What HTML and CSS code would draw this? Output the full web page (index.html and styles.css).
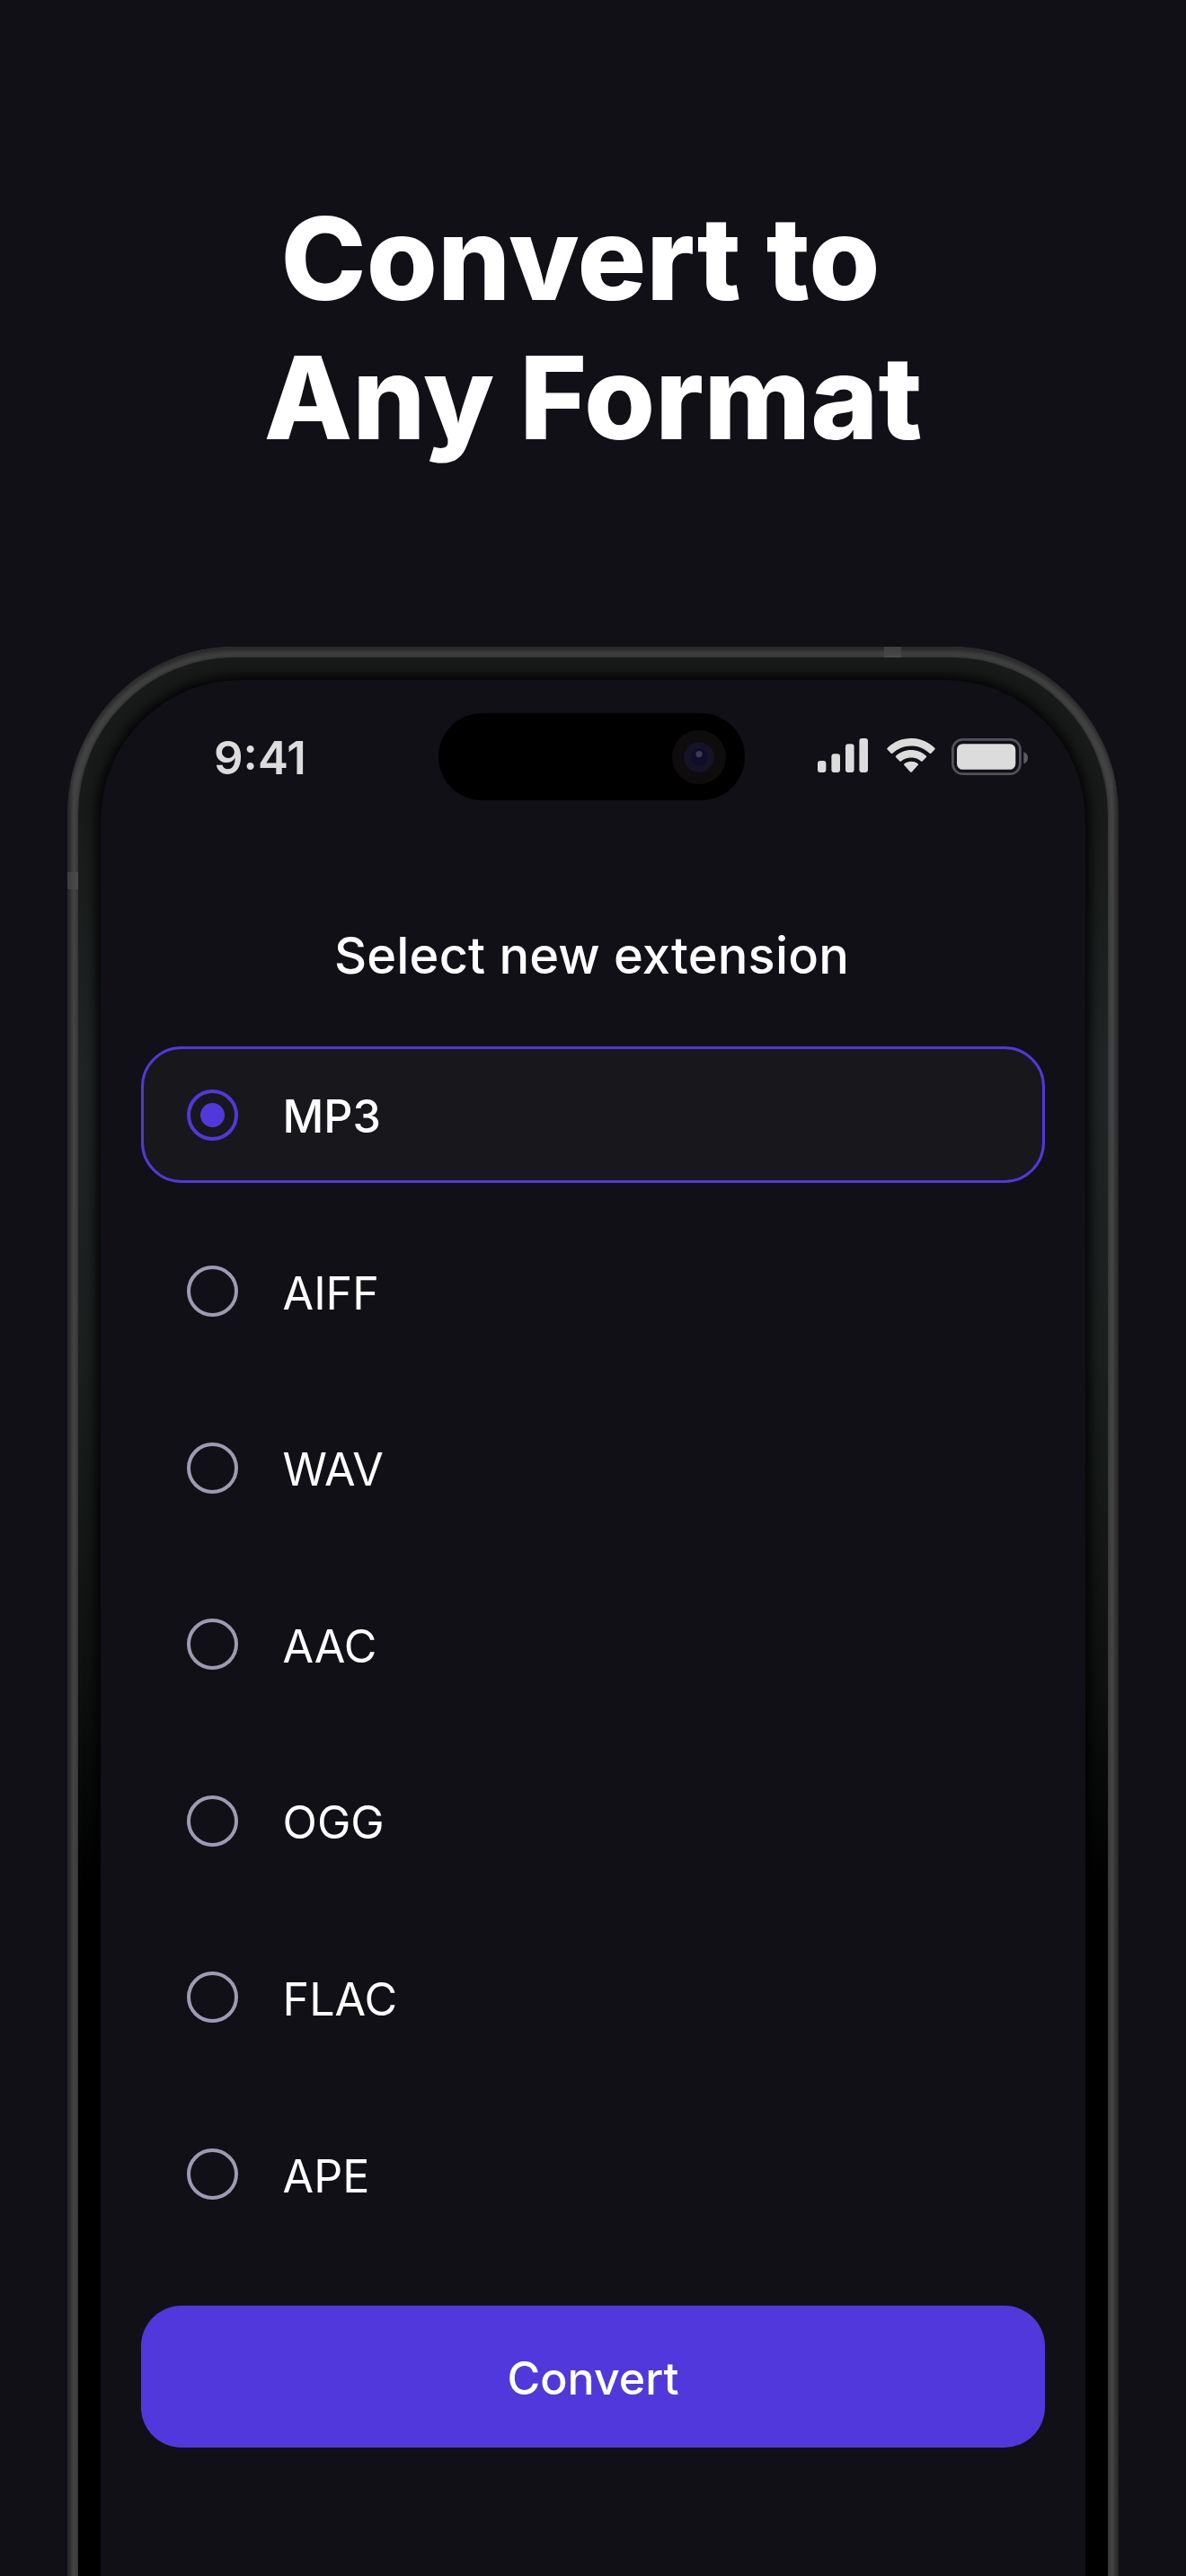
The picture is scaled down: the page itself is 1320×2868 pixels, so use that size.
FILE: index.html
```
<!DOCTYPE html>
<html lang="en">
<head>
    <meta charset="UTF-8">
    <meta name="viewport" content="width=device-width, initial-scale=1.0">
    <title>Convert to Any Format</title>
    <link rel="stylesheet" href="styles.css">
</head>
<body>
    <h1 class="headline">Convert to 
Any Format</h1>

    <div class="phone">
        <span class="antenna antenna-top"></span>
        <span class="antenna antenna-left"></span>
        <div class="bezel">
            <div class="screen">
                <div class="status-bar">
                    <span class="time">9:41</span>
                    <div class="island">
                        <svg class="camera" viewBox="0 0 60 60">
                            <circle cx="30" cy="30" r="30" fill="#0f0c0e"/>
                            <circle cx="30" cy="30" r="16.7" fill="#171326"/>
                            <circle cx="30" cy="30" r="9.8" fill="#0e0d2c"/>
                            <circle cx="30" cy="26.6" r="3.6" fill="#3f3955"/>
                        </svg>
                    </div>
                    <svg class="status-icons" viewBox="0 0 236 42">
                        <!-- Signal -->
                        <g fill="#dcdcdc">
                            <rect x="0" y="25" width="9.4" height="13" rx="3"/>
                            <rect x="15.4" y="17.3" width="9.6" height="20.7" rx="3"/>
                            <rect x="31" y="6.3" width="9.6" height="31.7" rx="3"/>
                            <rect x="46.4" y="0" width="9.6" height="38" rx="3"/>
                        </g>
                        <!-- Wifi -->
                        <g fill="#dcdcdc">
                            <path d="M104 0c-10.2 0-19.5 4-26.3 10.700-.6.6-.6 1.300 0 1.900l4 4.100c.5.5 1.200.5 1.700 0C88.800 11.500 96 8.400 104 8.400s15.200 3.100 20.600 8.300c.5.5 1.200.5 1.700 0l4-4.100c.6-.6.6-1.300 0-1.900C123.500 4 114.200 0 104 0z"/>
                            <path d="M104 13c-6.5 0-12.3 2.500-16.800 6.500-.6.5-.6 1.200 0 1.800l4.200 4.300c.5.5 1.100.5 1.600 0C96 23 99.800 21.500 104 21.500s8 1.500 11 4.100c.5.5 1.100.5 1.600 0l4.200-4.300c.6-.6.6-1.300 0-1.800C116.300 15.500 110.500 13 104 13z"/>
                            <path d="M104 25.700c-2.800 0-5.400 1-7.500 2.600-.6.5-.6 1.200-.1 1.800l6.800 7.300c.5.5 1.100.5 1.600 0l6.800-7.300c.5-.6.5-1.300-.1-1.800-2.100-1.600-4.700-2.600-7.500-2.600z"/>
                        </g>
                        <!-- Battery -->
                        <rect x="150.4" y="1.400" width="75" height="38.2" rx="11" fill="none" stroke="#535259" stroke-width="2.8"/>
                        <rect x="155" y="6.2" width="65.3" height="28.6" rx="6.5" fill="#dcdcdc"/>
                        <path d="M229.4 15c6.200 2.600 6.200 11 0 13.600z" fill="#5c5b61"/>
                    </svg>
                </div>

                <h2 class="title">Select new extension</h2>

                <ul class="formats">
                    <li class="format selected"><span class="radio"></span><span class="label">MP3</span></li>
                    <li class="format"><span class="radio"></span><span class="label">AIFF</span></li>
                    <li class="format"><span class="radio"></span><span class="label">WAV</span></li>
                    <li class="format"><span class="radio"></span><span class="label">AAC</span></li>
                    <li class="format"><span class="radio"></span><span class="label">OGG</span></li>
                    <li class="format"><span class="radio"></span><span class="label">FLAC</span></li>
                    <li class="format"><span class="radio"></span><span class="label">APE</span></li>
                </ul>

                <button class="convert-btn" type="button">Convert</button>
            </div>
        </div>
    </div>
</body>
</html>
```
FILE: styles.css
```
* {
    box-sizing: border-box;
}

body {
    margin: 0;
    height: 2868px;
    overflow: hidden;
    background-color: #111016;
    color: #fff;
    font-family: Inter, "Liberation Sans", sans-serif;
}

.headline {
    margin: 0;
    padding-top: 210px;
    height: 720px;
    font-size: 128px;
    line-height: 155px;
    font-weight: 800;
    text-align: center;
    white-space: break-spaces;
}

/* Phone frame, cut off at the bottom of the page */
.phone {
    position: relative;
    width: 1170px;
    height: 2148px;
    margin: 0 auto;
    padding: 12px 12px 0;
    border-radius: 186px 186px 0 0;
    background: linear-gradient(90deg, #262626 0, #444 7px, #444 1163px, #262626 1170px);
    box-shadow: inset 0 5px 5px 0 #282828;
    overflow: hidden;
}

.bezel {
    height: 100%;
    padding: 25px 25px 0;
    border-radius: 174px 174px 0 0;
    background: linear-gradient(#171a18 0, #171a18 160px, #202425 460px, #1b1f1e 780px, #0d100f 1150px, #000 1380px);
    box-shadow: 0 0 4px 0 #222;
}

.screen {
    height: 100%;
    padding: 37px 45px 0;
    border-radius: 156px 156px 0 0;
    background-color: #111016;
    box-shadow: 0 0 14px 4px #000;
}

.antenna {
    position: absolute;
}

.antenna-top {
    top: 0;
    left: 909px;
    width: 19px;
    height: 12px;
    background: linear-gradient(#3c3c3c, #4c4c4c);
}

.antenna-left {
    top: 251px;
    left: 0;
    width: 12px;
    height: 19px;
    background: linear-gradient(90deg, #3c3c3c, #4c4c4c);
}

/* Status bar */
.status-bar {
    display: flex;
    height: 97px;
    margin-right: 17px;
}

.time {
    width: 331px;
    padding: 19px 0 0 81px;
    font-size: 51px;
    line-height: 62px;
    font-weight: 600;
    color: #dcdcdc;
}

.island {
    display: flex;
    align-items: center;
    justify-content: flex-end;
    width: 341px;
    height: 97px;
    padding-right: 21px;
    border-radius: 49px;
    background-color: #000;
}

.camera {
    width: 60px;
    height: 60px;
}

.status-icons {
    width: 236px;
    height: 42px;
    margin: 28px 0 0 81px;
}

.title {
    margin: 139px 0 0;
    padding-right: 3px;
    font-size: 56px;
    line-height: 68px;
    font-weight: 500;
    letter-spacing: 0.14px;
    text-align: center;
}

.formats {
    display: flex;
    flex-direction: column;
    gap: 44.6px;
    margin: 67px 0 0;
    padding: 0;
    list-style: none;
}

.format {
    display: flex;
    align-items: center;
    gap: 50px;
    height: 152px;
    padding-left: 47.5px;
    border: 3px solid transparent;
    border-radius: 45px;
    font-size: 50.2px;
    font-weight: 400;
}

.format.selected {
    border-color: #5138dc;
    background-color: #18171c;
    font-weight: 500;
}

.label {
    padding-top: 3px;
}

.radio {
    display: flex;
    align-items: center;
    justify-content: center;
    width: 57px;
    height: 57px;
    border: 4px solid #9f9ab3;
    border-radius: 50%;
}

.selected .radio {
    border-color: #5138dc;
}

.selected .radio::after {
    content: "";
    width: 27px;
    height: 27px;
    border-radius: 50%;
    background-color: #5138dc;
}

.convert-btn {
    display: block;
    width: 100%;
    height: 158px;
    margin-top: 70px;
    padding: 3px 0 0;
    border: none;
    border-radius: 45px;
    background-color: #5138dc;
    color: #fff;
    font-family: inherit;
    font-size: 50.2px;
    font-weight: 500;
}
```
